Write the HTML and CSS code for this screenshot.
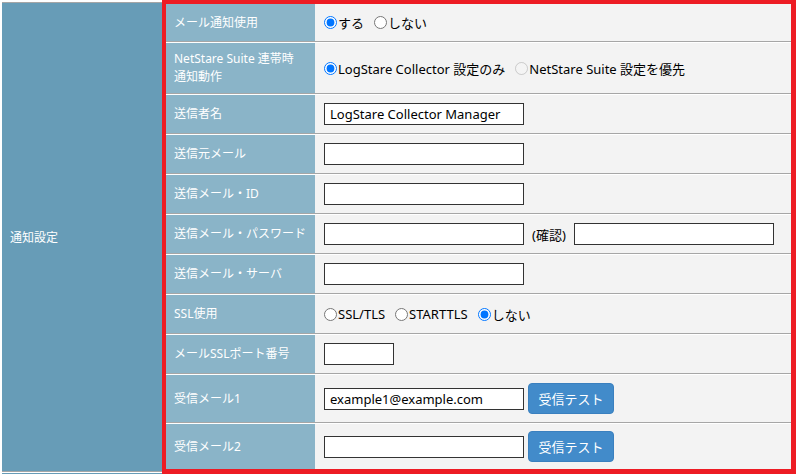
FILE: index.html
```html
<!DOCTYPE html>
<html lang="ja">
<head>
  <meta charset="UTF-8" />
  <title>通知設定</title>
  <link rel="stylesheet" href="styles.css">
</head>
<body>

  <div class="page">
    <div class="side">
      <div class="group">通知設定</div>
      <div class="group-next"></div>
    </div>

    <div class="frame">
      <table class="settings">
        <colgroup>
          <col class="col-label">
          <col>
        </colgroup>
        <tr class="row-first">
          <td class="label">メール通知使用</td>
          <td class="value">
            <div class="choices">
              <label><input type="radio" name="notify" checked>する</label>
              <label><input type="radio" name="notify">しない</label>
            </div>
          </td>
        </tr>
        <tr class="row-two">
          <td class="label">NetStare Suite 連帯時<br>通知動作</td>
          <td class="value">
            <div class="choices">
              <label><input type="radio" name="link" checked>LogStare Collector 設定のみ</label>
              <label><input type="radio" name="link" disabled>NetStare Suite 設定を優先</label>
            </div>
          </td>
        </tr>
        <tr>
          <td class="label">送信者名</td>
          <td class="value"><input type="text" class="field" value="LogStare Collector Manager"></td>
        </tr>
        <tr>
          <td class="label">送信元メール</td>
          <td class="value"><input type="text" class="field"></td>
        </tr>
        <tr>
          <td class="label">送信メール・ID</td>
          <td class="value"><input type="text" class="field"></td>
        </tr>
        <tr>
          <td class="label">送信メール・パスワード</td>
          <td class="value">
            <div class="inline">
              <input type="password" class="field">
              <span class="confirm">(確認)</span>
              <input type="password" class="field">
            </div>
          </td>
        </tr>
        <tr>
          <td class="label">送信メール・サーバ</td>
          <td class="value"><input type="text" class="field"></td>
        </tr>
        <tr>
          <td class="label">SSL使用</td>
          <td class="value">
            <div class="choices">
              <label><input type="radio" name="ssl">SSL/TLS</label>
              <label><input type="radio" name="ssl">STARTTLS</label>
              <label><input type="radio" name="ssl" checked>しない</label>
            </div>
          </td>
        </tr>
        <tr>
          <td class="label">メールSSLポート番号</td>
          <td class="value"><input type="text" class="field field-port"></td>
        </tr>
        <tr class="row-btn">
          <td class="label">受信メール1</td>
          <td class="value">
            <div class="inline">
              <input type="text" class="field" value="example1@example.com">
              <button class="btn-test">受信テスト</button>
            </div>
          </td>
        </tr>
        <tr class="row-last">
          <td class="label">受信メール2</td>
          <td class="value">
            <div class="inline">
              <input type="text" class="field">
              <button class="btn-test">受信テスト</button>
            </div>
          </td>
        </tr>
      </table>
    </div>
  </div>

</body>
</html>
```

FILE: styles.css
```css
:root {
  --group-bg: #679cb7;
  --label-bg: #8ab4c8;
  --value-bg: #f3f3f3;
  --line: #a6a6a6;
  --mark: #ed1c24;
  --btn: #428bca;
}

body {
  margin: 0;
  height: 474px;
  overflow: hidden;
  background: #ffffff;
  font-family: 'Noto Sans', 'Noto Sans CJK JP', sans-serif;
  color: #000;
}

.page {
  display: flex;
  align-items: flex-start;
  padding-left: 2px;
}

.side {
  width: 160px;
  display: flex;
  flex-direction: column;
}

.group {
  margin-top: 2px;
  height: 468px;
  border-top: 1px solid var(--line);
  border-bottom: 1px solid var(--line);
  background: var(--group-bg);
  color: #fff;
  font-size: 12px;
  padding-left: 8px;
  display: flex;
  align-items: center;
}

.group-next {
  margin-top: 1px;
  height: 10px;
  background: var(--group-bg);
}

.frame {
  width: 634px;
  box-sizing: border-box;
  border: 4px solid var(--mark);
  border-right-width: 5px;
  border-bottom-width: 5px;
}

.settings {
  width: 100%;
  table-layout: fixed;
  border-collapse: separate;
  border-spacing: 0;
}

.col-label {
  width: 149px;
}

.settings td {
  box-sizing: border-box;
  height: 40px;
  border-top: 1px solid #fff;
  border-bottom: 1px solid var(--line);
  vertical-align: middle;
}

.settings .row-first td {
  height: 38px;
  border-top: 0;
}

.settings .row-two td {
  height: 52px;
}

.settings .row-btn td {
  height: 49px;
}

.settings .row-last td {
  height: 46px;
  border-bottom: 0;
}

.label {
  background: var(--label-bg);
  color: #fff;
  font-size: 12px;
  line-height: 18px;
  padding: 0 8px;
}

.value {
  background: var(--value-bg);
  font-size: 13px;
  padding: 0 9px;
}

.choices {
  display: flex;
  align-items: center;
  gap: 10px;
}

.choices label {
  display: flex;
  align-items: center;
}

.choices input {
  width: 13px;
  height: 13px;
  margin: 0 1px 0 0;
}

.inline {
  display: flex;
  align-items: center;
}

.field {
  box-sizing: border-box;
  width: 200px;
  height: 22px;
  margin: 0;
  padding: 0 5px;
  border: 1px solid #333;
  background: #fff;
  font-family: inherit;
  font-size: 13px;
  color: #000;
}

.field-port {
  width: 70px;
}

.confirm {
  margin: 0 8px;
}

.btn-test {
  margin-left: 4px;
  width: 86px;
  height: 31px;
  border: 1px solid #3a80bf;
  border-radius: 4px;
  background: var(--btn);
  color: #fff;
  font-family: inherit;
  font-size: 13px;
  cursor: pointer;
}
```
